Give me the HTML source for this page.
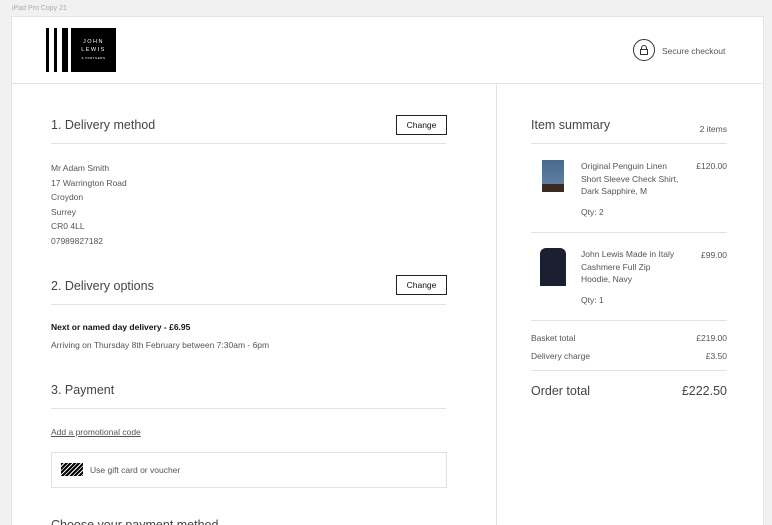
<!DOCTYPE html><html><head><style>
html,body{margin:0;width:772px;height:525px;overflow:hidden}
body{background:#f1f1f1;font-family:"Liberation Sans",sans-serif;color:#444;position:relative}
.a{position:absolute}
.card{left:11px;top:16px;width:751px;height:520px;background:#fff;border:1px solid #e4e4e4}
.t{font-size:8.5px;color:#555;line-height:14.5px}
.h{font-size:12.5px;color:#444}
.r{text-align:right;width:80px}
.line{height:1px;background:#e2e2e2}
.btn{border:1px solid #222;font-size:8.5px;width:49px;height:18px;line-height:18px;text-align:center;color:#111}
</style></head><body>
<div class="a" style="left:12px;top:5px;font-size:7px;color:#aaa">iPad Pro Copy 21</div>
<div class="a card"></div>
<div class="a" style="left:46px;top:28px;width:3px;height:44px;background:#000"></div>
<div class="a" style="left:54px;top:28px;width:3px;height:44px;background:#000"></div>
<div class="a" style="left:62px;top:28px;width:6px;height:44px;background:#000"></div>
<div class="a" style="left:71px;top:28px;width:45px;height:44px;background:#000;color:#fff;text-align:center;font-size:5.5px;letter-spacing:1.5px;line-height:8px;padding-top:10px;box-sizing:border-box">JOHN<br>LEWIS<br><span style="font-size:3px;letter-spacing:.5px">&amp; PARTNERS</span></div>
<div class="a" style="left:633px;top:39px;width:20px;height:20px;border:1px solid #333;border-radius:50%"></div>
<svg class="a" style="left:638px;top:44px" width="12" height="12"><path d="M3.5 5.5V4a2.5 2.5 0 0 1 5 0v1.5" fill="none" stroke="#333"/><rect x="2.5" y="5.5" width="7" height="5" fill="none" stroke="#333"/></svg>
<div class="a t" style="left:662px;top:44px">Secure checkout</div>
<div class="a line" style="left:12px;top:83px;width:750px"></div>
<div class="a" style="left:496px;top:84px;width:1px;height:441px;background:#e2e2e2"></div>

<div class="a h" style="left:51px;top:118px">1. Delivery method</div>
<div class="a btn" style="left:396px;top:115px">Change</div>
<div class="a line" style="left:51px;top:143px;width:395px"></div>
<div class="a t" style="left:51px;top:161px">Mr Adam Smith<br>17 Warrington Road<br>Croydon<br>Surrey<br>CR0 4LL<br>07989827182</div>
<div class="a h" style="left:51px;top:279px">2. Delivery options</div>
<div class="a btn" style="left:396px;top:275px">Change</div>
<div class="a line" style="left:51px;top:304px;width:395px"></div>
<div class="a t" style="left:51px;top:320px;font-weight:bold;color:#111">Next or named day delivery - £6.95</div>
<div class="a t" style="left:51px;top:338px">Arriving on Thursday 8th February between 7:30am - 6pm</div>
<div class="a h" style="left:51px;top:383px">3. Payment</div>
<div class="a line" style="left:51px;top:408px;width:395px"></div>
<div class="a t" style="left:51px;top:425px;text-decoration:underline">Add a promotional code</div>
<div class="a" style="left:51px;top:452px;width:394px;height:34px;border:1px solid #e2e2e2"></div>
<div class="a" style="left:61px;top:463px;width:22px;height:13px;background:repeating-linear-gradient(135deg,#000 0 2px,#fff 2px 3px)"></div>
<div class="a t" style="left:90px;top:463px">Use gift card or voucher</div>
<div class="a h" style="left:51px;top:518px">Choose your payment method</div>

<div class="a h" style="left:531px;top:118px">Item summary</div>
<div class="a t r" style="left:647px;top:122px">2 items</div>
<div class="a line" style="left:531px;top:143px;width:196px"></div>
<div class="a" style="left:542px;top:160px;width:22px;height:32px;background:linear-gradient(#4a6a8c,#5e7fa3 75%,#3a2a20 75%)"></div>
<div class="a t" style="left:581px;top:160px;width:103px;line-height:12.5px">Original Penguin Linen Short Sleeve Check Shirt, Dark Sapphire, M</div>
<div class="a t r" style="left:647px;top:159px">£120.00</div>
<div class="a t" style="left:581px;top:205px">Qty: 2</div>
<div class="a line" style="left:531px;top:232px;width:196px"></div>
<div class="a" style="left:540px;top:248px;width:26px;height:38px;background:#1b2030;border-radius:6px 6px 0 0"></div>
<div class="a t" style="left:581px;top:248px;width:100px;line-height:12.5px">John Lewis Made in Italy Cashmere Full Zip Hoodie, Navy</div>
<div class="a t r" style="left:647px;top:248px">£99.00</div>
<div class="a t" style="left:581px;top:293px">Qty: 1</div>
<div class="a line" style="left:531px;top:320px;width:196px"></div>
<div class="a t" style="left:531px;top:331px">Basket total</div><div class="a t r" style="left:647px;top:331px">£219.00</div>
<div class="a t" style="left:531px;top:349px">Delivery charge</div><div class="a t r" style="left:647px;top:349px">£3.50</div>
<div class="a line" style="left:531px;top:370px;width:196px"></div>
<div class="a h" style="left:531px;top:384px">Order total</div>
<div class="a h r" style="left:647px;top:384px">£222.50</div>
</body></html>
